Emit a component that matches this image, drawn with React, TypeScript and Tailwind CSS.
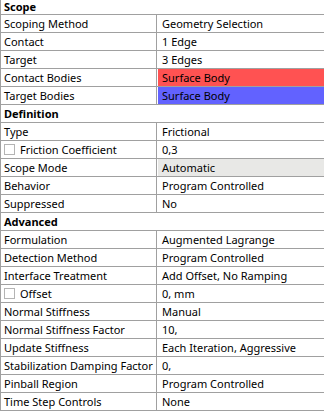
import React from 'react';

type Row =
    | { kind: 'header'; label: string }
    | { kind: 'row'; label: string; value: string; check?: boolean; bg?: string };

const rows: Row[] = [
    { kind: 'header', label: 'Scope' },
    { kind: 'row', label: 'Scoping Method', value: 'Geometry Selection' },
    { kind: 'row', label: 'Contact', value: '1 Edge' },
    { kind: 'row', label: 'Target', value: '3 Edges' },
    { kind: 'row', label: 'Contact Bodies', value: 'Surface Body', bg: 'red' },
    { kind: 'row', label: 'Target Bodies', value: 'Surface Body', bg: 'blue' },
    { kind: 'header', label: 'Definition' },
    { kind: 'row', label: 'Type', value: 'Frictional' },
    { kind: 'row', label: 'Friction Coefficient', value: '0,3', check: true },
    { kind: 'row', label: 'Scope Mode', value: 'Automatic', bg: 'gray' },
    { kind: 'row', label: 'Behavior', value: 'Program Controlled' },
    { kind: 'row', label: 'Suppressed', value: 'No' },
    { kind: 'header', label: 'Advanced' },
    { kind: 'row', label: 'Formulation', value: 'Augmented Lagrange' },
    { kind: 'row', label: 'Detection Method', value: 'Program Controlled' },
    { kind: 'row', label: 'Interface Treatment', value: 'Add Offset, No Ramping' },
    { kind: 'row', label: 'Offset', value: '0, mm', check: true },
    { kind: 'row', label: 'Normal Stiffness', value: 'Manual' },
    { kind: 'row', label: 'Normal Stiffness Factor', value: '10,' },
    { kind: 'row', label: 'Update Stiffness', value: 'Each Iteration, Aggressive' },
    { kind: 'row', label: 'Stabilization Damping Factor', value: '0,' },
    { kind: 'row', label: 'Pinball Region', value: 'Program Controlled' },
    { kind: 'row', label: 'Time Step Controls', value: 'None' },
];

const bgClass = (bg?: string) =>
    bg === 'red' ? 'bg-[#ff5252]' : bg === 'blue' ? 'bg-[#6262ff]' : bg === 'gray' ? 'bg-[#e8e8e6]' : 'bg-white';

export default function App() {
    return (
        <div className="w-[324px] h-[412px] overflow-hidden bg-white text-[11px] text-[#000] leading-none" style={{ fontFamily: '"Noto Sans", "DejaVu Sans", sans-serif' }}>
            <div className="border-l border-[#a0a0a0]">
                {rows.map((r, i) =>
                    r.kind === 'header' ? (
                        <div
                            key={i}
                            className={`flex border-b border-[#a0a0a0] pl-[3px] font-bold ${i === 0 ? 'h-[15px] items-end pb-[2px]' : 'h-[18px] items-center'}`}
                        >
                            {r.label}
                        </div>
                    ) : (
                        <div key={i} className="flex h-[18px] border-b border-[#a0a0a0]">
                            <div className="flex w-[156px] shrink-0 items-center gap-[5px] border-r border-[#a0a0a0] pl-[3px] whitespace-nowrap">
                                {r.check && <span className="inline-block h-[11px] w-[11px] border border-[#b4b4b4] bg-white" />}
                                {r.label}
                            </div>
                            <div className={`flex flex-1 items-center pl-[4px] ml-[1px] whitespace-nowrap ${bgClass(r.bg)}`}>
                                {r.value}
                            </div>
                        </div>
                    )
                )}
            </div>
        </div>
    );
}
